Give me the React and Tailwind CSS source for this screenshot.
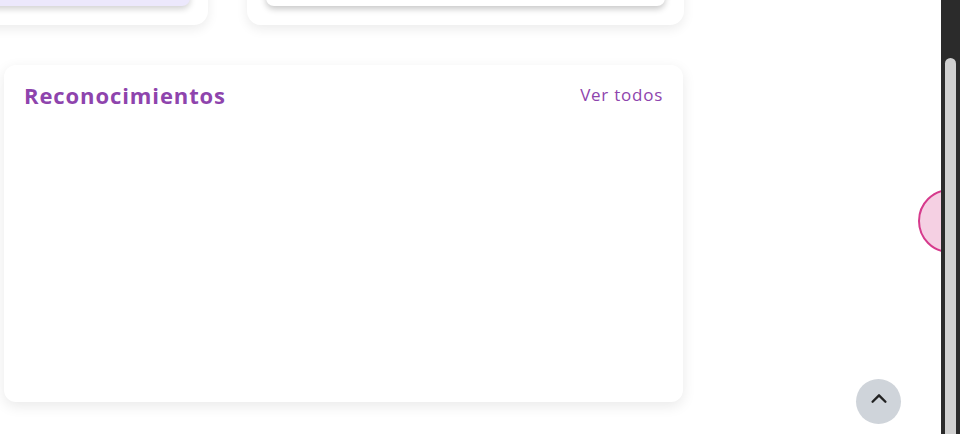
export default function App() {
  return (
    <div className="w-[960px] h-[434px] flex overflow-hidden bg-white" style={{ fontFamily: '"Open Sans", "Noto Sans", sans-serif' }}>
      <div className="flex-1 relative overflow-hidden">
        <div className="flex gap-[39px] ml-[-230px] mt-[-95px]">
          <div className="w-[438px] h-[120px] bg-white rounded-[14px] shadow-[0_4px_12px_rgba(0,0,0,0.08)] px-[18px] pb-[19px] flex flex-col justify-end">
            <div className="h-[80px] bg-[#ece8fc] rounded-[8px] shadow-[0_3px_6px_rgba(0,0,0,0.18)]"></div>
          </div>
          <div className="w-[437px] h-[120px] bg-white rounded-[14px] shadow-[0_4px_12px_rgba(0,0,0,0.08)] px-[19px] pb-[19px] flex flex-col justify-end">
            <div className="h-[80px] bg-white rounded-[8px] shadow-[0_3px_6px_rgba(0,0,0,0.22)]"></div>
          </div>
        </div>
        <div className="ml-[4px] mt-[40px] w-[679px] h-[337px] bg-white rounded-[12px] shadow-[0_4px_14px_rgba(0,0,0,0.09)] px-5 pt-[15px]">
          <div className="flex items-center justify-between">
            <h2 className="text-[22px] leading-[30px] font-bold text-[#8e44ad] tracking-[0.9px]">Reconocimientos</h2>
            <a className="text-[17px] leading-[30px] text-[#8e44ad] tracking-[0.75px]">Ver todos</a>
          </div>
        </div>
        <div className="absolute left-[918px] top-[189px] w-[64px] h-[64px] rounded-full bg-[#f5d0e3] border-2 border-[#d63a8c]"></div>
        <div className="absolute left-[856px] top-[379px] w-[45px] h-[45px] rounded-full bg-[#cfd4da] flex items-center justify-center">
          <svg width="22" height="22" viewBox="0 0 24 24" fill="none" stroke="#222" strokeWidth="2.6" strokeLinecap="round" strokeLinejoin="round" className="-mt-[5px]">
            <path d="M5 15 L12 8 L19 15" />
          </svg>
        </div>
      </div>
      <div className="w-[19px] h-full bg-[#2b2b2b] flex justify-center pt-[58px] shrink-0">
        <div className="w-[11px] h-full bg-[#d0d0d0] rounded-t-full"></div>
      </div>
    </div>
  );
}
